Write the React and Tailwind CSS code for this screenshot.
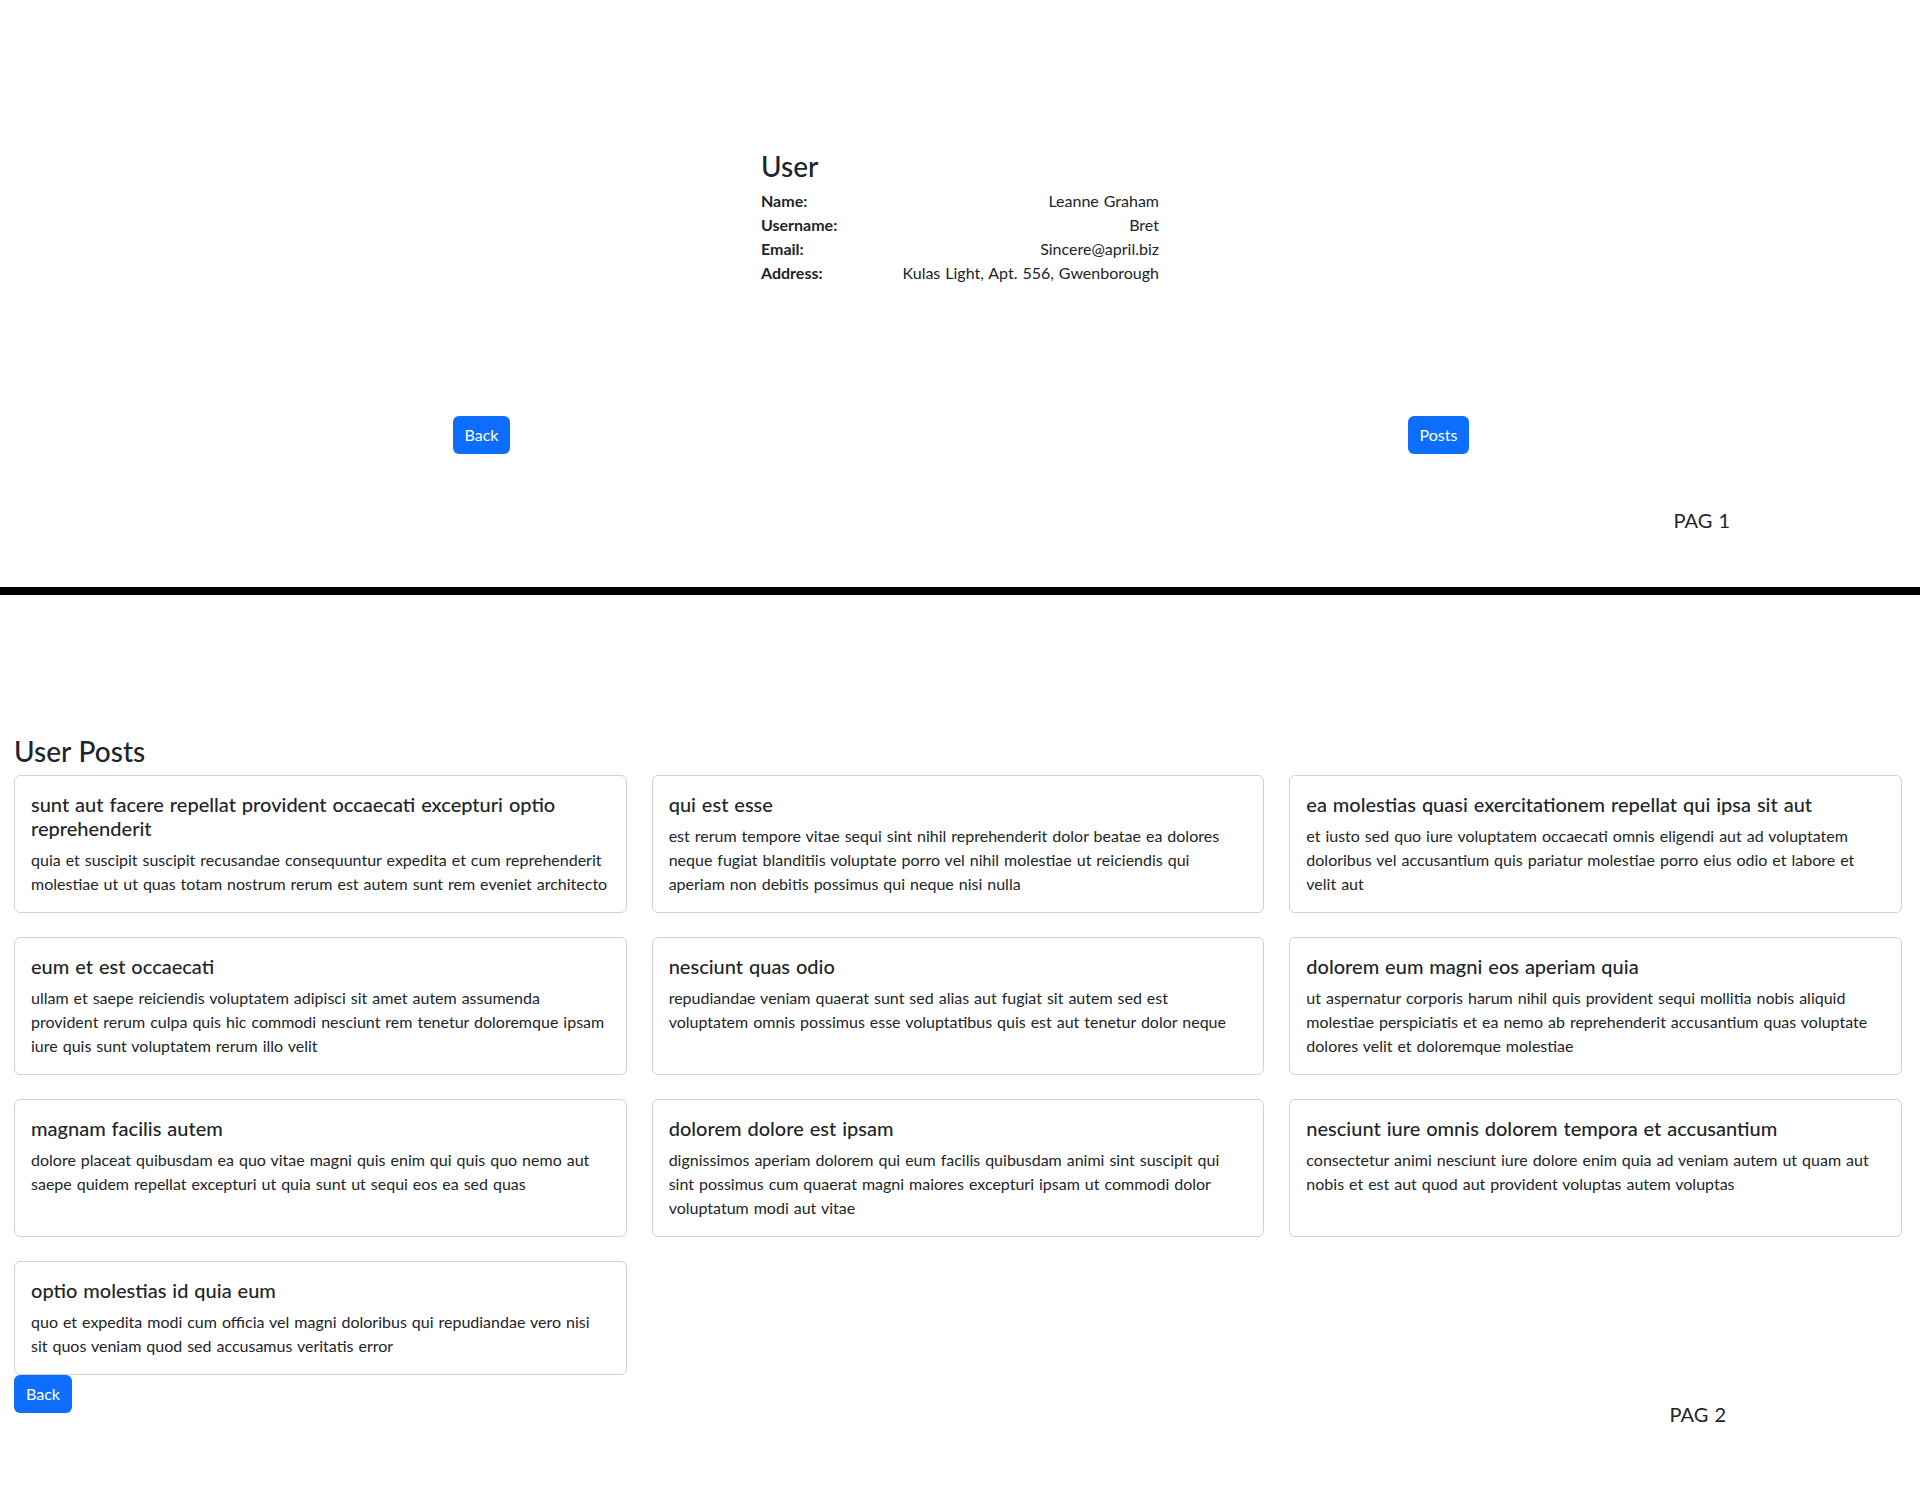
import React from 'react';

const user = {
  name: 'Leanne Graham',
  username: 'Bret',
  email: 'Sincere@april.biz',
  address: 'Kulas Light, Apt. 556, Gwenborough',
};

const posts = [
  {
    id: 1,
    title: 'sunt aut facere repellat provident occaecati excepturi optio reprehenderit',
    body: 'quia et suscipit suscipit recusandae consequuntur expedita et cum reprehenderit molestiae ut ut quas totam nostrum rerum est autem sunt rem eveniet architecto',
  },
  {
    id: 2,
    title: 'qui est esse',
    body: 'est rerum tempore vitae sequi sint nihil reprehenderit dolor beatae ea dolores neque fugiat blanditiis voluptate porro vel nihil molestiae ut reiciendis qui aperiam non debitis possimus qui neque nisi nulla',
  },
  {
    id: 3,
    title: 'ea molestias quasi exercitationem repellat qui ipsa sit aut',
    body: 'et iusto sed quo iure voluptatem occaecati omnis eligendi aut ad voluptatem doloribus vel accusantium quis pariatur molestiae porro eius odio et labore et velit aut',
  },
  {
    id: 4,
    title: 'eum et est occaecati',
    body: 'ullam et saepe reiciendis voluptatem adipisci sit amet autem assumenda provident rerum culpa quis hic commodi nesciunt rem tenetur doloremque ipsam iure quis sunt voluptatem rerum illo velit',
  },
  {
    id: 5,
    title: 'nesciunt quas odio',
    body: 'repudiandae veniam quaerat sunt sed alias aut fugiat sit autem sed est voluptatem omnis possimus esse voluptatibus quis est aut tenetur dolor neque',
  },
  {
    id: 6,
    title: 'dolorem eum magni eos aperiam quia',
    body: 'ut aspernatur corporis harum nihil quis provident sequi mollitia nobis aliquid molestiae perspiciatis et ea nemo ab reprehenderit accusantium quas voluptate dolores velit et doloremque molestiae',
  },
  {
    id: 7,
    title: 'magnam facilis autem',
    body: 'dolore placeat quibusdam ea quo vitae magni quis enim qui quis quo nemo aut saepe quidem repellat excepturi ut quia sunt ut sequi eos ea sed quas',
  },
  {
    id: 8,
    title: 'dolorem dolore est ipsam',
    body: 'dignissimos aperiam dolorem qui eum facilis quibusdam animi sint suscipit qui sint possimus cum quaerat magni maiores excepturi ipsam ut commodi dolor voluptatum modi aut vitae',
  },
  {
    id: 9,
    title: 'nesciunt iure omnis dolorem tempora et accusantium',
    body: 'consectetur animi nesciunt iure dolore enim quia ad veniam autem ut quam aut nobis et est aut quod aut provident voluptas autem voluptas',
  },
  {
    id: 10,
    title: 'optio molestias id quia eum',
    body: 'quo et expedita modi cum officia vel magni doloribus qui repudiandae vero nisi sit quos veniam quod sed accusamus veritatis error',
  },
];

function Button({ children }) {
  return (
    <button className="bg-[#0d6efd] text-white text-base leading-6 px-3 py-[7px] rounded-md">
      {children}
    </button>
  );
}

export default function App() {
  return (
    <div className="min-h-[1488px] bg-white text-[#212529] font-['Lato',sans-serif] [word-spacing:0.055em]">
      {/* User page */}
      <section className="pt-[150px]">
        <div className="w-[398px] mx-auto">
          <h3 className="text-[28px] leading-[1.2] font-medium mb-[5px]">User</h3>
          <div className="grid grid-cols-[auto_1fr] text-base leading-6">
            <span className="font-bold">Name:</span>
            <span className="text-right">{user.name}</span>
            <span className="font-bold">Username:</span>
            <span className="text-right">{user.username}</span>
            <span className="font-bold">Email:</span>
            <span className="text-right">{user.email}</span>
            <span className="font-bold pr-6">Address:</span>
            <span className="text-right">{user.address}</span>
          </div>
        </div>

        <div className="grid grid-cols-2 justify-items-center px-[3px] mt-[131px]">
          <Button>Back</Button>
          <Button>Posts</Button>
        </div>

        <div className="flex justify-end pr-[190px] mt-[54px]">
          <h5 className="text-xl leading-6">PAG 1</h5>
        </div>
      </section>

      <hr className="mt-[55px] h-2 bg-black border-0" />

      {/* Posts page */}
      <section className="pl-[14px] pr-[18px] pt-[140px] pb-16">
        <h3 className="text-[28px] leading-[1.2] font-medium mb-[7px]">User Posts</h3>
        <div className="grid grid-cols-3 gap-x-[25px] gap-y-6">
          {posts.map(post => (
            <div key={post.id} className="border border-black/[0.175] rounded-md p-4">
              <h5 className="text-xl leading-6 font-medium mb-2">{post.title}</h5>
              <p className="text-base leading-6">{post.body}</p>
            </div>
          ))}
        </div>
        <div className="flex items-start justify-between">
          <Button>Back</Button>
          <h5 className="text-xl leading-6 mt-[27px] mr-[176px]">PAG 2</h5>
        </div>
      </section>
    </div>
  );
}
